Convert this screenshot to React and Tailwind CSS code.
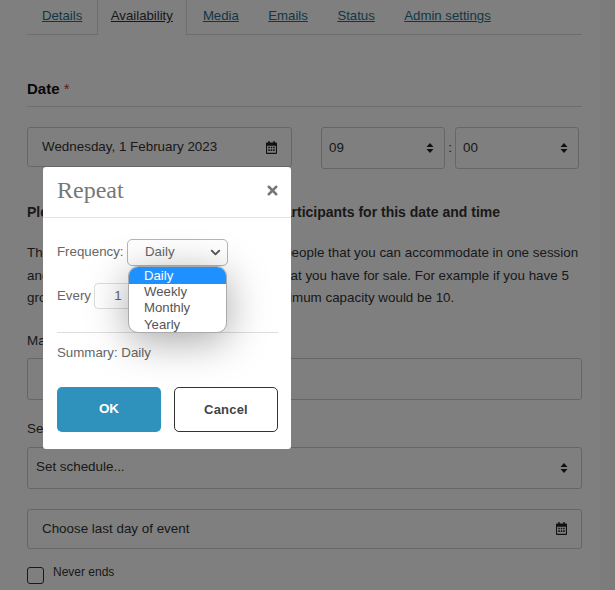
import { X, ChevronDown } from 'lucide-react'

const TABS = ['Details', 'Availability', 'Media', 'Emails', 'Status', 'Admin settings']

function CalIcon() {
  return (
    <svg width="11" height="13" viewBox="0 0 12 14" className="text-[#222]">
      <path fill="currentColor" d="M2.500 0h1.500v1.500h4V0h1.500v1.500H11a1 1 0 0 1 1 1V13a1 1 0 0 1-1 1H1a1 1 0 0 1-1-1V2.500a1 1 0 0 1 1-1h1.500zM1.200 5v7.800h9.600V5z" />
      <path fill="currentColor" d="M2.500 6.200h1.700v1.700H2.500zM5.150 6.200h1.700v1.700h-1.700zM7.800 6.200h1.700v1.700H7.800zM2.500 9h1.700v1.700H2.500zM5.150 9h1.700v1.700h-1.700zM7.800 9h1.700v1.700H7.800z" />
    </svg>
  )
}

function Updown() {
  return (
    <svg width="8" height="12" viewBox="0 0 8 12" className="text-[#222]">
      <path fill="currentColor" d="M4 1l3.500 4h-7zM4 11L.500 7h7z" />
    </svg>
  )
}

function Page() {
  return (
    <div className="flex-1 pl-[27px] pr-[18px] text-[13.400px] text-[#333]">
      {/* Tabs */}
      <div className="flex h-[35px] border-b border-[#ddd] text-[13.200px]">
        {TABS.map(t => (
          <div
            key={t}
            className={t === 'Availability'
              ? 'h-[35px] pt-[6px] px-[13px] mr-[1px] bg-white border-x border-[#ddd] underline text-[#333]'
              : 'h-[34px] pt-[6px] pl-[15px] pr-[14.500px] underline text-[#1f6f8b]'}
          >
            {t}
          </div>
        ))}
      </div>

      <div className="mt-[44px] pb-[7px] border-b border-[#ddd] font-bold text-[15px] leading-[20px] text-[#111]">
        Date <span className="font-normal text-[#c0392b]">*</span>
      </div>

      <div className="mt-[20px] flex items-start">
        <div className="w-[265px] h-[40px] pl-[14px] pr-[14px] flex items-center justify-between border border-[#ccc] rounded-[3px]">
          <span>Wednesday, 1 February 2023</span>
          <CalIcon />
        </div>
        <div className="ml-[29px] w-[124px] h-[42px] pl-[7px] pr-[10px] flex items-center justify-between border border-[#ccc] rounded-[3px]">
          <span className="mt-[1px]">09</span>
          <Updown />
        </div>
        <span className="w-[10px] h-[42px] leading-[42px] text-center">:</span>
        <div className="w-[124px] h-[42px] pl-[7px] pr-[10px] flex items-center justify-between border border-[#ccc] rounded-[3px]">
          <span className="mt-[1px]">00</span>
          <Updown />
        </div>
      </div>

      <p className="mt-[33px] font-bold text-[14px] leading-[20px] whitespace-nowrap">Please set your maximum number of participants for this date and time</p>
      <p className="mt-[20px] leading-[22.500px] whitespace-nowrap">
        The <span className="tracking-[1px]">maximum capacity</span> is the number of people that you can accommodate in one session<br />
        and must be at least the number of tickets that you have for sale. For example if you have 5<br />
        groups of 2 people in each session, the maximum capacity would be 10.
      </p>

      <div className="mt-[21px] leading-[20px]">Maximum capacity</div>
      <div className="mt-[7px] h-[42px] border border-[#ccc] rounded-[3px]" />

      <div className="mt-[19px] leading-[20px]">Set schedule</div>
      <div className="mt-[8px] h-[42px] pl-[8px] pr-[13px] flex items-center justify-between border border-[#ccc] rounded-[3px]">
        <span className="-mt-[1px]">Set schedule...</span>
        <Updown />
      </div>

      <div className="mt-[20px] h-[40px] pl-[14px] pr-[14px] flex items-center justify-between border border-[#ccc] rounded-[3px]">
        <span className="mt-[1px]">Choose last day of event</span>
        <CalIcon />
      </div>

      <div className="mt-[18px] flex items-start gap-[9px]">
        <div className="w-[17px] h-[17px] border border-[#333] rounded-[3px]" />
        <span className="text-[12px] leading-[14px] -mt-[2px]">Never ends</span>
      </div>
    </div>
  )
}

function Modal() {
  return (
    <div className="absolute left-[43px] top-[167px] w-[248px] h-[282px] bg-white rounded-[3px] text-[#666] text-[13.300px]">
      <div className="h-[51px] pl-[14px] pr-[11px] flex items-center justify-between border-b border-[#e5e5e5]">
        <span className="text-[24px] text-[#777] -mt-[5px]" style={{ fontFamily: '"Liberation Serif", serif' }}>Repeat</span>
        <X size={15} strokeWidth={4} className="text-[#777] -mt-[4px]" />
      </div>

      <div className="pl-[14px] pr-[13px]">
        <div className="mt-[20px] flex items-center h-[28px]">
          <span className="w-[70px]">Frequency:</span>
          <div className="relative w-[101px] h-[27px] pl-[17px] pr-[4px] flex items-center justify-between border border-[#8fc1d8] rounded-[5px]">
            <span>Daily</span>
            <ChevronDown size={15} strokeWidth={3} className="text-[#555]" />
            <div className="absolute left-[0px] top-[26px] w-[99px] h-[67px] bg-white rounded-[10px] overflow-hidden border border-[#aaa] shadow-[0_8px_40px_rgba(0,0,0,0.35)] text-[13.200px] leading-[16.400px] text-[#555]">
              <div className="bg-[#1e90ff] text-white pl-[15px] pt-[1px]">Daily</div>
              <div className="pl-[15px]">Weekly</div>
              <div className="pl-[15px]">Monthly</div>
              <div className="pl-[15px]">Yearly</div>
            </div>
          </div>
        </div>

        <div className="mt-[17px] flex items-center h-[26px]">
          <span className="w-[37px]">Every</span>
          <div className="w-[50px] h-[26px] border border-[#ddd] rounded-[4px] text-center leading-[24px] pr-[2px]">1</div>
        </div>

        <div className="mt-[23px] border-t border-[#ddd]" />
        <div className="mt-[10px] leading-[20px]">Summary: Daily</div>

        <div className="mt-[24px] flex justify-between">
          <div className="w-[104px] h-[45px] rounded-[5px] bg-[#2f92bd] flex items-center justify-center text-white font-bold text-[13.400px]">OK</div>
          <div className="w-[104px] h-[45px] rounded-[5px] border border-[#333] flex items-center justify-center text-[#444] font-bold text-[13px] tracking-[0.2px]">Cancel</div>
        </div>
      </div>
    </div>
  )
}

export default function App() {
  return (
    <div className="relative flex h-[590px] w-[615px] overflow-hidden bg-white" style={{ fontFamily: '"Liberation Sans", Arial, sans-serif' }}>
      <Page />
      <div className="w-[15px] bg-[#f8f8f8]" />
      <div className="absolute inset-0 bg-black/50" />
      <Modal />
    </div>
  )
}
